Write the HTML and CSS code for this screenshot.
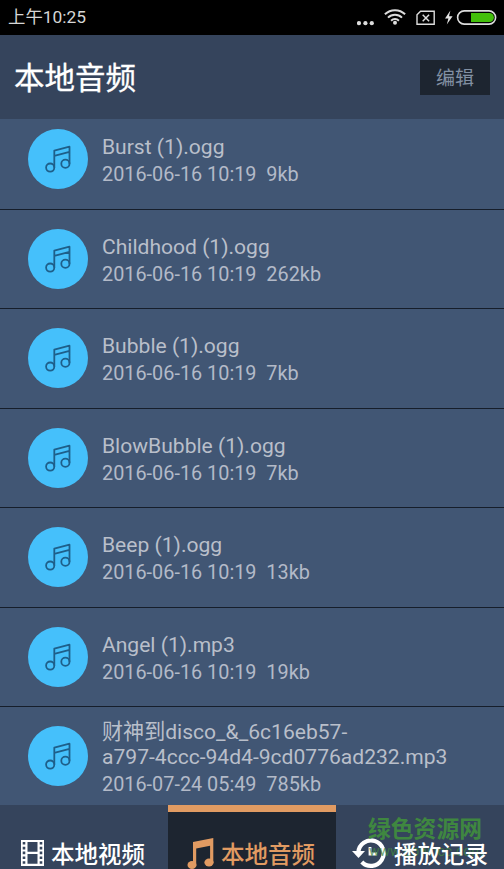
FILE: index.html
```html
<!DOCTYPE html>
<html lang="zh-CN">
<head>
<meta charset="utf-8">
<title>本地音频</title>
<link rel="stylesheet" href="styles.css">
</head>
<body>
<svg class="defs" width="0" height="0" aria-hidden="true">
  <symbol id="note" viewBox="0 0 60 60">
    <g fill="none" stroke="#1e5f8a" stroke-width="1.8" stroke-linejoin="round">
      <circle cx="22.2" cy="38.6" r="4.1"/>
      <circle cx="37.4" cy="34.8" r="4.1"/>
      <path d="M26.3 38.6V21.7L41.5 17.7V34.8M26.3 26.9l15.2-4"/>
    </g>
  </symbol>
</svg>
<div class="app">
  <div class="status">
    <span class="time">上午10:25</span>
    <svg class="status-icons" width="146" height="35" viewBox="-2 0 146 35">
      <g fill="#dcdcdc"><circle cx="0" cy="23.2" r="2.1"/><circle cx="6.4" cy="23.2" r="2.1"/><circle cx="12.8" cy="23.2" r="2.1"/><circle cx="36" cy="22.8" r="2"/></g>
      <g fill="none" stroke="#dcdcdc" stroke-width="2">
        <path d="M25.9 14.2a14.6 14.6 0 0 1 20.2 0M29 17.6a10 10 0 0 1 14 0M32.1 20.7a5.6 5.6 0 0 1 7.8 0"/>
        <path stroke-width="1.4" d="M61.6 11.2H75.2V24.2H58V14.8Z"/>
        <path stroke-width="1.5" d="M63.7 14.8l6.4 6.4M70.1 14.8l-6.4 6.4"/>
        <rect x="98.6" y="10.9" width="38" height="13.2" rx="6.6" stroke-width="1.6"/>
      </g>
      <path fill="#e4e4e4" d="M91.4 10.5l-5.4 8h3.4l-1.6 6 5.8-8.2h-3.6z"/>
      <path fill="#43bf0b" d="M112 13h18.4a4.5 4.5 0 0 1 0 9H112z"/>
    </svg>
  </div>
  <header class="header">
    <h1>本地音频</h1>
    <button class="edit">编辑</button>
  </header>
  <main class="list">
    <div class="row"><svg class="disc"><use href="#note"/></svg><div class="info"><div class="name">Burst (1).ogg</div><div class="meta">2016-06-16 10:19&nbsp; 9kb</div></div></div>
    <div class="row"><svg class="disc"><use href="#note"/></svg><div class="info"><div class="name">Childhood (1).ogg</div><div class="meta">2016-06-16 10:19&nbsp; 262kb</div></div></div>
    <div class="row"><svg class="disc"><use href="#note"/></svg><div class="info"><div class="name">Bubble (1).ogg</div><div class="meta">2016-06-16 10:19&nbsp; 7kb</div></div></div>
    <div class="row"><svg class="disc"><use href="#note"/></svg><div class="info"><div class="name">BlowBubble (1).ogg</div><div class="meta">2016-06-16 10:19&nbsp; 7kb</div></div></div>
    <div class="row"><svg class="disc"><use href="#note"/></svg><div class="info"><div class="name">Beep (1).ogg</div><div class="meta">2016-06-16 10:19&nbsp; 13kb</div></div></div>
    <div class="row"><svg class="disc"><use href="#note"/></svg><div class="info"><div class="name">Angel (1).mp3</div><div class="meta">2016-06-16 10:19&nbsp; 19kb</div></div></div>
    <div class="row"><svg class="disc"><use href="#note"/></svg><div class="info"><div class="name">财神到disco_&amp;_6c16eb57-<br>a797-4ccc-94d4-9cd0776ad232.mp3</div><div class="meta">2016-07-24 05:49&nbsp; 785kb</div></div></div>
  </main>
  <nav class="tabs">
    <div class="tab">
      <svg width="24" height="28" viewBox="0 0 24 28"><path fill="#fff" fill-rule="evenodd" d="M0 1H23V27H0ZM6.5 3V12.7H16.5V3ZM6.5 15V24.7H16.5V15ZM1.7 3v2.6h2.6V3ZM1.7 7.8v2.6h2.6V7.8ZM1.7 12.6v2.6h2.6v-2.6ZM1.7 17.4V20h2.6v-2.6ZM1.7 22.2v2.6h2.6v-2.6ZM18.7 3v2.6h2.6V3ZM18.7 7.8v2.6h2.6V7.8ZM18.7 12.6v2.6h2.6v-2.6ZM18.7 17.4V20h2.6v-2.6ZM18.7 22.2v2.6h2.6v-2.6Z"/></svg>
      <span>本地视频</span>
    </div>
    <div class="tab active">
      <svg width="28" height="32" viewBox="0 0 28 32"><g fill="#e19b62"><path d="M6 5L26.3 1V26h-3.2V8.7L9.2 11.6V29H6Z"/><ellipse cx="5" cy="28" rx="4.5" ry="4"/><ellipse cx="22" cy="25.5" rx="4.6" ry="4"/></g></svg>
      <span>本地音频</span>
    </div>
    <div class="tab">
      <svg width="36" height="32" viewBox="0 0 36 32"><g fill="none" stroke="#fff"><path stroke-width="4.2" d="M6.3 15.5A12.7 12.7 0 1 1 9.8 25"/><path stroke-width="2.8" d="M18 10V17H25"/></g><path fill="#fff" d="M0 14H13L6.5 21Z"/></svg>
      <span>播放记录</span>
    </div>
    <div class="watermark"><b>绿色资源网</b><small>www.downcc.com</small></div>
  </nav>
</div>
</body>
</html>
```
FILE: styles.css
```css
* { box-sizing: border-box; }
body { margin: 0; font-family: Roboto, "Noto Sans CJK SC", sans-serif; }
.defs { position: absolute; }
.app {
  width: 504px;
  height: 869px;
  overflow: hidden;
  display: flex;
  flex-direction: column;
  background: #415674;
}
.status {
  flex: none;
  height: 35px;
  display: flex;
  align-items: center;
  justify-content: space-between;
  padding-left: 8px;
  background: #000;
}
.time { font-size: 17.4px; line-height: 35px; color: #d6d6d6; }
.status-icons { margin-right: 1px; }
.header {
  flex: none;
  height: 84px;
  display: flex;
  align-items: center;
  justify-content: space-between;
  padding: 0 14px;
  background: #35445c;
}
h1 { margin: 4px 0 0; font-size: 30.5px; font-weight: 400; line-height: 40px; color: #fff; -webkit-text-stroke: .3px #fff; }
.edit {
  width: 70px;
  height: 35px;
  padding: 2px 0 0;
  border: 0;
  background: #1d2530;
  color: #8290a3;
  font: 19px/33px Roboto, "Noto Sans CJK SC", sans-serif;
}
.list { flex: none; height: 686px; overflow: hidden; display: flex; flex-direction: column; }
.row {
  flex: none;
  height: 99.5px;
  display: flex;
  align-items: center;
  gap: 14px;
  padding-left: 28px;
  border-bottom: 1px solid #161e2b;
}
.row:first-child { height: 90.5px; padding-bottom: 9px; }
.row:last-child { border-bottom: 0; height: 98.5px; }
.disc { flex: none; width: 60px; height: 60px; border-radius: 50%; background: #45c0fb; }
.info { white-space: nowrap; padding-top: 3px; }
.name { font-size: 21.07px; line-height: 25px; color: #b9bfca; }
.meta { margin-top: 3px; font-size: 19.85px; line-height: 25px; color: #b3bac8; }
.tabs {
  position: relative;
  flex: none;
  height: 64px;
  display: grid;
  grid-template-columns: repeat(3, 1fr);
  background: #35445c;
}
.tab {
  display: flex;
  align-items: center;
  justify-content: center;
  gap: 6px;
  padding-top: 32px;
  font-size: 23.5px;
  font-weight: 500;
  line-height: 26px;
  color: #fff;
}
.tab svg { flex: none; margin-bottom: 3px; }
.tab span { position: relative; z-index: 2; }
.tab:first-child { padding-right: 2px; }
.active { padding: 25px 2px 0 0; border-top: 7px solid #e19b62; background: #1d2530; color: #e19b62; }
.watermark {
  position: absolute;
  z-index: 1;
  left: 368px;
  top: 11px;
  width: 116px;
  color: #3f8740;
  white-space: nowrap;
}
.watermark b { display: block; font-size: 22.8px; line-height: 28px; font-weight: 700; }
.watermark small { display: block; margin-left: 1px; font-size: 14px; line-height: 14px; opacity: .75; }
```
